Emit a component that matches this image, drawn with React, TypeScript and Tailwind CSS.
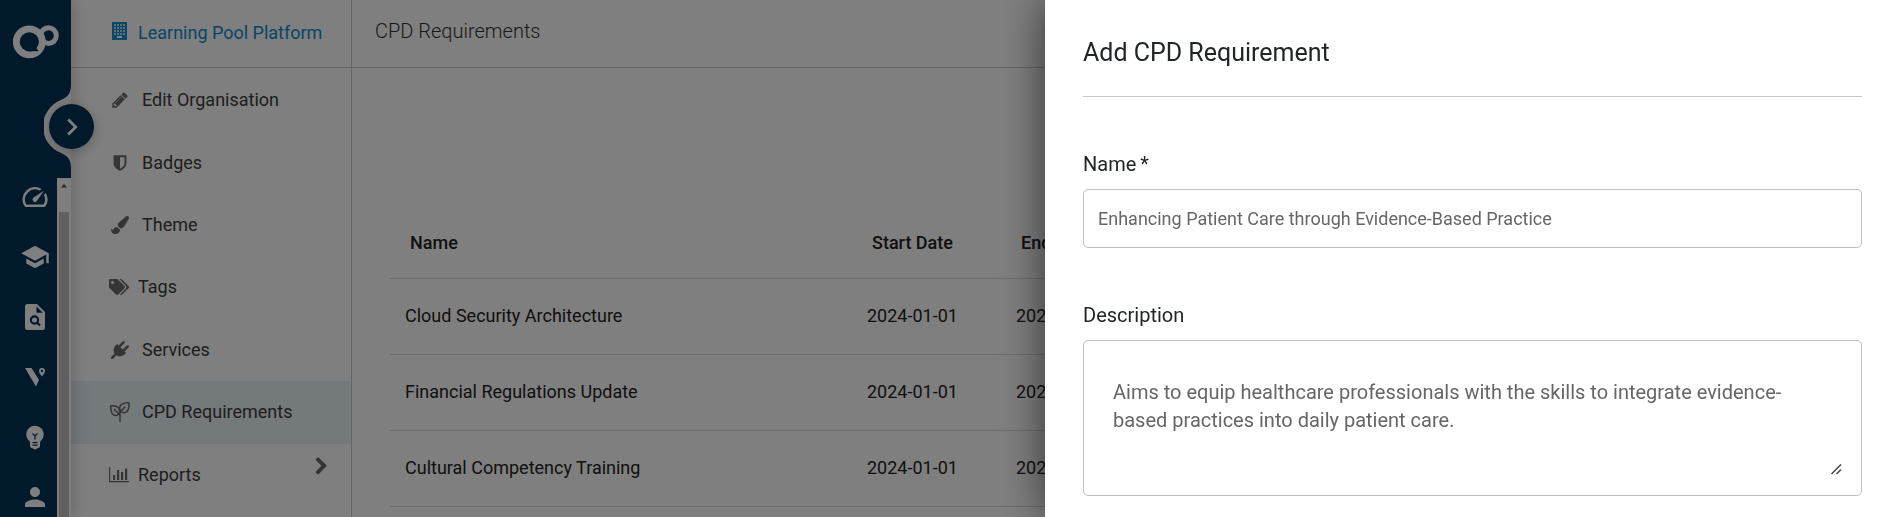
import { type ReactNode } from "react";
import { FaPaintBrush, FaTags } from "react-icons/fa";
import {
  MdChevronRight,
  MdEmojiObjects,
  MdOutlineSpeed,
  MdPerson,
  MdSchool,
} from "react-icons/md";

function LogoIcon() {
  return (
    <svg width="47" height="35" viewBox="0 0 47 35" aria-hidden="true">
      <circle cx="36.5" cy="11.6" r="7.8" fill="none" stroke="#fff" strokeWidth="5" />
      <circle cx="17.3" cy="17.8" r="16.4" fill="#fff" />
      <circle cx="17.3" cy="17.8" r="9.6" fill="#003256" />
      <path d="M17.3 27.3h9.4l-2.2-3 1-3z" fill="#003256" />
    </svg>
  );
}

function BuildingIcon() {
  const rows = [2, 5, 8, 11];
  const cols = [2, 5, 8, 11];
  return (
    <svg width="15" height="18" viewBox="0 0 15 18" fill="currentColor" className="mb-1" aria-hidden="true">
      <rect width="15" height="18" rx="0.7" />
      {rows.map((y) =>
        cols.map((x) => (
          <rect key={`${x}-${y}`} x={x} y={y} width="2" height="2" fill="#fff" fillOpacity="0.7" />
        ))
      )}
      <rect x="5" y="14" width="5" height="2" fill="#fff" />
    </svg>
  );
}

function GlyphIcon({ path, size = 18 }: { path: string; size?: number }) {
  return (
    <svg width={size} height={size} viewBox="0 0 1792 1792" fill="currentColor" aria-hidden="true">
      <path d={path} />
    </svg>
  );
}

const glyphs = {
  pencil:
    "M491 1536l91-91-235-235-91 91v107h128v128h107zm523-928q0-22-22-22-10 0-17 7l-542 542q-7 7-7 17 0 22 22 22 10 0 17-7l542-542q7-7 7-17zm-54-192l416 416-832 832h-416v-416zm683 96q0 53-37 90l-166 166-416-416 166-165q36-38 90-38 53 0 91 38l235 234q37 39 37 91z",
  shield:
    "M1344 960v-640h-448v1137q119-63 213-137 235-184 235-360zm192-768v768q0 86-33.5 170.5t-83 150-118 127.5-126.5 103-121 77.5-89.5 49.5-42.5 20q-12 6-26 6t-26-6q-16-7-42.5-20t-89.5-49.5-121-77.5-126.5-103-118-127.5-83-150-33.5-170.5v-768q0-26 19-45t45-19h1152q26 0 45 19t19 45z",
  plug: "M1755 453q37 38 37 90.5t-37 90.5l-401 400 150 150-160 160q-163 163-389.5 186.5t-411.5-100.5l-362 362h-181v-181l362-362q-124-185-100.5-411.5t186.5-389.5l160-160 150 150 400-401q38-37 91-37t90 37 37 90.5-37 90.5l-400 401 234 234 401-400q38-37 91-37t90 37z",
  chevron:
    "M1363 877l-742 742q-19 19-45 19t-45-19l-166-166q-19-19-19-45t19-45l531-531-531-531q-19-19-19-45t19-45l166-166q19-19 45-19t45 19l742 742q19 19 19 45t-19 45z",
};

function SeedlingIcon() {
  return (
    <svg
      width="20"
      height="20"
      viewBox="0 0 20 20"
      fill="none"
      stroke="currentColor"
      strokeWidth="1.5"
      strokeLinejoin="round"
      aria-hidden="true"
    >
      <path d="M19 .9C12.500.5 9 3 9.800 7c.6 2.800 3.500 4.300 5.900 3.300C18.400 9 19.300 5.500 19 .9z" />
      <path d="M.9 3.800c4.800-.2 8.200 1.300 8.700 4.700.4 3.200-1.900 5.400-4.500 4.900C2 12.800.6 9 .9 3.800z" />
      <path d="M4 7l6 6.300M15.300 4.500L10 10.500V20" />
    </svg>
  );
}

function BarChartIcon() {
  return (
    <svg width="20" height="16" viewBox="0 0 20 16" fill="currentColor" aria-hidden="true">
      <path d="M0 0h1.2v14h18.800v1.2H0zM4 8h2.2v5H4zM8 3h2.2v10H8zM12 5h2.2v8H12zM16 1.5h2.2V13H16z" />
    </svg>
  );
}

function FileSearchIcon() {
  return (
    <svg width="20" height="26" viewBox="0 0 20 26" aria-hidden="true">
      <path d="M2.5 0H12l8 8v15.5a2.5 2.5 0 0 1-2.5 2.5h-15A2.5 2.5 0 0 1 0 23.5v-21A2.5 2.5 0 0 1 2.5 0z" fill="#fff" />
      <path d="M11.5 2.5v6.3h6.3z" fill="#003256" />
      <circle cx="9.5" cy="16" r="3.6" fill="none" stroke="#003256" strokeWidth="2.2" />
      <path d="M12 18.5l3 3" stroke="#003256" strokeWidth="2.2" />
    </svg>
  );
}

function VenueIcon() {
  return (
    <svg width="20" height="19" viewBox="0 0 20 19" fill="#fff" aria-hidden="true">
      <path d="M0 0h6.500L14 12l-3 6.500z" />
      <path
        fillRule="evenodd"
        d="M17 0a3 3 0 0 1 3 3c0 2.200-3 5.500-3 5.500S14 5.200 14 3a3 3 0 0 1 3-3zm0 1.800a1.200 1.200 0 1 0 0 2.400 1.200 1.200 0 0 0 0-2.400z"
      />
    </svg>
  );
}

const railItems: { label: string; icon: ReactNode }[] = [
  { label: "Dashboard", icon: <MdOutlineSpeed size={30} /> },
  { label: "Learning", icon: <MdSchool size={30} /> },
  { label: "Search", icon: <FileSearchIcon /> },
  { label: "Venues", icon: <VenueIcon /> },
  { label: "Ideas", icon: <MdEmojiObjects size={30} /> },
  { label: "Profile", icon: <MdPerson size={30} /> },
];

const menuItems = [
  { label: "Edit Organisation", icon: <GlyphIcon path={glyphs.pencil} /> },
  { label: "Badges", icon: <GlyphIcon path={glyphs.shield} /> },
  { label: "Theme", icon: <FaPaintBrush size={18} /> },
  { label: "Tags", icon: <FaTags size={20} />, wide: true },
  { label: "Services", icon: <GlyphIcon path={glyphs.plug} /> },
  { label: "CPD Requirements", icon: <SeedlingIcon />, active: true },
  { label: "Reports", icon: <BarChartIcon />, wide: true, more: true },
];

const requirements = [
  { name: "Cloud Security Architecture", start: "2024-01-01", end: "2024-12-31" },
  { name: "Financial Regulations Update", start: "2024-01-01", end: "2024-12-31" },
  { name: "Cultural Competency Training", start: "2024-01-01", end: "2024-12-31" },
];

function Rail() {
  return (
    <nav className="relative z-10 flex w-[71px] shrink-0 flex-col bg-[#003256] shadow-[2px_0_16px_rgba(0,0,0,0.2)]">
      <div className="flex h-[178px] shrink-0 justify-center pt-6">
        <a href="#home" aria-label="Home" className="h-9">
          <LogoIcon />
        </a>
      </div>

      {/* notch that the toggle button sits in */}
      <svg className="absolute top-[84px] right-0" width="27" height="85" viewBox="0 0 27 85" aria-hidden="true">
        <path
          d="M27 0C27 10 24 12.500 17 16A28.500 28.500 0 0 0 17 69C24 72.500 27 75 27 85z"
          fill="#f3f3f3"
        />
      </svg>
      <button
        aria-label="Expand navigation"
        className="absolute top-[104px] left-[49px] flex size-[45px] items-center justify-center rounded-full bg-[#003256] text-white shadow-[2px_3px_12px_rgba(0,0,0,0.2)]"
      >
        <MdChevronRight size={34} />
      </button>

      <div className="flex min-h-0 flex-1 overflow-hidden">
        <ul className="flex flex-1 flex-col pl-3">
          {railItems.map((item) => (
            <li key={item.label} className="flex h-[60px] shrink-0 justify-center">
              <a href="#rail" aria-label={item.label} className="flex h-[38px] items-center text-white">
                {item.icon}
              </a>
            </li>
          ))}
        </ul>
        <div className="flex w-3.5 flex-col items-center bg-[#fcfcfc]">
          <svg className="mt-1.5 mb-6" width="6" height="4" viewBox="0 0 6 4" aria-hidden="true">
            <path d="M0 3.500L3 0l3 3.500z" fill="#505050" />
          </svg>
          <div className="w-2.5 flex-1 bg-[#c1c1c1]" />
        </div>
      </div>
    </nav>
  );
}

function SideMenu() {
  return (
    <aside className="w-[281px] shrink-0 border-r border-[#cacaca]">
      <a
        href="#platform"
        className="flex h-[68px] items-center gap-[11px] border-b border-[#cacaca] pb-0.5 pl-[41px] text-lg text-[#0d8ccc]"
      >
        <BuildingIcon />
        Learning Pool Platform
      </a>
      <ul className="grid h-[438px] auto-rows-fr pt-px">
        {menuItems.map((item) => (
          <li key={item.label}>
            <a
              href="#menu"
              className={`flex h-full items-center pl-[37px] text-lg text-[#3c3c3c] ${
                item.active ? "bg-[#e9f2f9]" : ""
              }`}
            >
              <span
                className={`flex justify-center text-[#6a6a6a] ${item.wide ? "mr-2 w-[22px]" : "mr-2.5 w-6"}`}
              >
                {item.icon}
              </span>
              <span className="flex-1">{item.label}</span>
              {item.more && (
                <span className="mr-5 mb-4 text-[#6a6a6a]">
                  <GlyphIcon path={glyphs.chevron} size={19} />
                </span>
              )}
            </a>
          </li>
        ))}
      </ul>
    </aside>
  );
}

function RequirementsPage() {
  return (
    <main className="min-w-0 flex-1">
      <header className="flex h-[68px] items-center border-b border-[#cacaca] pb-1.5 pl-[23px]">
        <h1 className="text-xl font-light text-[#333]">CPD Requirements</h1>
      </header>
      <div className="px-[38px] pt-[140px]">
        <table className="w-full table-fixed border-collapse text-left text-lg text-[#222]">
          <thead>
            <tr className="h-[70px] border-b border-[#d8d8d8]">
              <th className="w-[462px] px-5 font-medium">Name</th>
              <th className="w-[149px] px-5 font-medium">Start Date</th>
              <th className="px-5 font-medium">End Date</th>
            </tr>
          </thead>
          <tbody>
            {requirements.map((row) => (
              <tr key={row.name} className="h-[76px] border-b border-[#d8d8d8]">
                <td className="px-[15px]">{row.name}</td>
                <td className="px-[15px]">{row.start}</td>
                <td className="px-[15px]">{row.end}</td>
              </tr>
            ))}
          </tbody>
        </table>
      </div>
    </main>
  );
}

function AddRequirementDrawer() {
  return (
    <section
      role="dialog"
      aria-labelledby="drawer-title"
      className="fixed inset-y-0 right-0 z-30 w-[847px] max-w-full overflow-hidden bg-white pr-[30px] pl-[38px] text-[#212529] shadow-[0_0_40px_rgba(0,0,0,0.6)]"
    >
      <h2 id="drawer-title" className="border-b border-[#c8c8c8] pt-[37px] pb-[27px] text-[25px] leading-8">
        Add CPD Requirement
      </h2>
      <form className="flex flex-col pt-[53px]">
        <label htmlFor="name" className="flex gap-1 text-xl">
          Name <span>*</span>
        </label>
        <input
          id="name"
          type="text"
          defaultValue="Enhancing Patient Care through Evidence-Based Practice"
          className="mt-[11px] h-[59px] rounded-[5px] border border-[#c0c0c0] px-3.5 text-lg text-[#666]"
        />
        <label htmlFor="description" className="mt-[53px] text-xl">
          Description
        </label>
        <div className="relative mt-[11px] rounded-[5px] border border-[#c0c0c0] px-[17px] py-5">
          <textarea
            id="description"
            rows={4}
            defaultValue="Aims to equip healthcare professionals with the skills to integrate evidence-based practices into daily patient care."
            className="block h-[114px] w-full resize-none px-3 py-[17px] text-xl leading-7 text-[#666] outline-none"
          />
          <svg
            className="pointer-events-none absolute right-[19px] bottom-5"
            width="11"
            height="11"
            viewBox="0 0 11 11"
            aria-hidden="true"
          >
            <path d="M0.5 10L10 0.5M5.5 10L10 5.5" stroke="#444" strokeWidth="1.5" />
          </svg>
        </div>
      </form>
    </section>
  );
}

export default function App() {
  return (
    <div className="flex h-screen overflow-hidden bg-white font-[Roboto,sans-serif]">
      <Rail />
      <SideMenu />
      <RequirementsPage />
      <div className="fixed inset-0 z-20 bg-black/50" />
      <AddRequirementDrawer />
    </div>
  );
}
